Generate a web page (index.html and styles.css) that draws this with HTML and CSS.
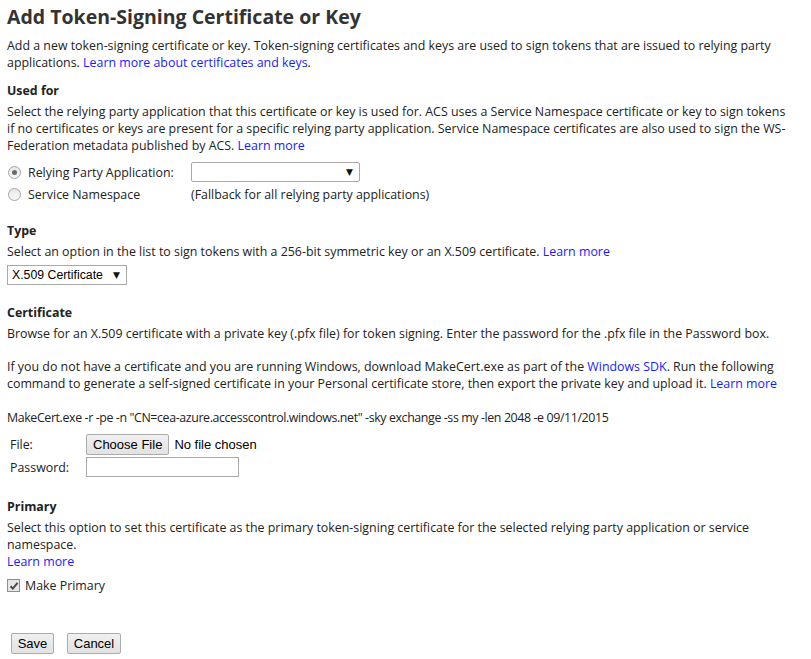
FILE: index.html
```html
<!DOCTYPE html>
<html>
<head>
<meta charset="utf-8">
<link rel="stylesheet" href="styles.css">
</head>
<body>
<div class="page">
  <h1 class="title">Add Token-Signing Certificate or Key</h1>
  <p class="para intro">Add a new token-signing certificate or key. Token-signing certificates and keys are used to sign tokens that are issued to relying party<br>applications. <a class="link" href="#">Learn more about certificates and keys</a>.</p>

  <h2 class="heading">Used for</h2>
  <p class="para">Select the relying party application that this certificate or key is used for. ACS uses a Service Namespace certificate or key to sign tokens<br>if no certificates or keys are present for a specific relying party application. Service Namespace certificates are also used to sign the WS-<br>Federation metadata published by ACS. <a class="link" href="#">Learn more</a></p>

  <div class="radios">
    <div class="radio-row">
      <span class="radio checked"></span>
      <span class="radio-label">Relying Party Application:</span>
      <span class="rp-select"><span class="arrow">▼</span></span>
    </div>
    <div class="radio-row">
      <span class="radio"></span>
      <span class="radio-label">Service Namespace</span>
      <span class="fallback">(Fallback for all relying party applications)</span>
    </div>
  </div>

  <h2 class="heading type-heading">Type</h2>
  <p class="para">Select an option in the list to sign tokens with a 256-bit symmetric key or an X.509 certificate. <a class="link" href="#">Learn more</a></p>
  <div class="type-select">X.509 Certificate <span class="arrow">▼</span></div>

  <h2 class="heading cert-heading">Certificate</h2>
  <p class="para">Browse for an X.509 certificate with a private key (.pfx file) for token signing. Enter the password for the .pfx file in the Password box.</p>
  <p class="para gap first-gap">If you do not have a certificate and you are running Windows, download MakeCert.exe as part of the <a class="link" href="#">Windows SDK</a>. Run the following<br>command to generate a self-signed certificate in your Personal certificate store, then export the private key and upload it. <a class="link" href="#">Learn more</a></p>
  <p class="para gap cmd">MakeCert.exe -r -pe -n "CN=cea-azure.accesscontrol.windows.net" -sky exchange -ss my -len 2048 -e 09/11/2015</p>

  <div class="form-grid">
    <span class="form-label">File:</span>
    <span class="file-field"><span class="btn">Choose File</span><span class="nofile">No file chosen</span></span>
    <span class="form-label">Password:</span>
    <span class="text-input"></span>
  </div>

  <h2 class="heading primary-heading">Primary</h2>
  <p class="para">Select this option to set this certificate as the primary token-signing certificate for the selected relying party application or service<br>namespace.<br><a class="link" href="#">Learn more</a></p>
  <div class="check-row">
    <span class="checkbox"><svg width="10" height="10" viewBox="0 0 10 10"><path d="M1.5 5.2 L3.8 7.6 L8.6 1.8" fill="none" stroke="#4a4a4a" stroke-width="2"/></svg></span>
    <span class="check-label">Make Primary</span>
  </div>

  <div class="actions">
    <span class="btn save">Save</span>
    <span class="btn cancel">Cancel</span>
  </div>
</div>
</body>
</html>
```

FILE: styles.css
```css
html, body {
  margin: 0;
  padding: 0;
  background: #ffffff;
}
.page {
  padding: 4px 0 0 7px;
  font-family: "Open Sans", "Noto Sans", sans-serif;
  font-size: 12.4px;
  line-height: 17px;
  color: #222222;
  width: 804px;
}
.title {
  margin: 0;
  font-size: 19.5px;
  line-height: 26px;
  font-weight: 700;
  color: #333333;
}
.para {
  margin: 0;
  white-space: nowrap;
}
.intro {
  margin-top: 7px;
}
.link {
  color: #1a1aff;
  text-decoration: none;
}
.heading {
  margin: 11px 0 4px 0;
  font-size: 12.4px;
  line-height: 17px;
  font-weight: 700;
  color: #222222;
}
.radios {
  margin-top: 8px;
  display: flex;
  flex-direction: column;
  gap: 2px;
}
.radio-row {
  display: flex;
  align-items: center;
  height: 20px;
}
.radio {
  width: 11px;
  height: 11px;
  border-radius: 50%;
  border: 1px solid #a5a5a5;
  background: linear-gradient(#e8e8e8, #f8f8f8);
  margin: 0 7px 0 1px;
  position: relative;
  flex: none;
}
.radio.checked::after {
  content: "";
  position: absolute;
  left: 3px;
  top: 3px;
  width: 5px;
  height: 5px;
  border-radius: 50%;
  background: #6a6a6a;
}
.radio-label {
  width: 163px;
  flex: none;
}
.rp-select {
  width: 167px;
  height: 18px;
  border: 1px solid #a9a9a9;
  border-radius: 2px;
  display: flex;
  justify-content: flex-end;
  align-items: center;
  box-sizing: content-box;
}
.arrow {
  font-family: "DejaVu Sans", sans-serif;
  font-size: 9px;
  color: #111;
  margin-right: 6px;
}
.type-heading {
  margin-top: 18px;
}
.type-select {
  margin-top: 5px;
  width: 114px;
  height: 18px;
  border: 1px solid #a9a9a9;
  font-family: "Liberation Sans", Arial, sans-serif;
  font-size: 12.3px;
  line-height: 18px;
  color: #000;
  padding-left: 4px;
  display: flex;
  justify-content: space-between;
  align-items: center;
}
.type-select .arrow {
  margin-right: 6px;
}
.cert-heading {
  margin-top: 19px;
}
.gap {
  margin-top: 17px;
}
.first-gap {
  margin-top: 16px;
}
.cmd {
  letter-spacing: -0.39px;
}
.form-grid {
  display: grid;
  grid-template-columns: 76px auto;
  grid-auto-rows: 20px;
  row-gap: 3px;
  align-items: center;
  margin-top: 8px;
  padding-left: 3px;
}
.file-field {
  display: flex;
  align-items: center;
  gap: 5px;
  font-family: "Liberation Sans", Arial, sans-serif;
  font-size: 13px;
  color: #000;
}
.btn {
  display: inline-flex;
  align-items: center;
  justify-content: center;
  box-sizing: border-box;
  height: 21px;
  padding: 0 6px;
  border: 1px solid #acacac;
  border-radius: 2px;
  background: linear-gradient(#f0f0f0, #e2e2e2);
  font-family: "Liberation Sans", Arial, sans-serif;
  font-size: 13px;
  color: #000;
}
.text-input {
  width: 151px;
  height: 18px;
  border: 1px solid #a9a9a9;
  display: block;
}
.primary-heading {
  margin-top: 21px;
}
.check-row {
  margin-top: 7px;
  display: flex;
  align-items: center;
  height: 17px;
}
.checkbox {
  width: 11px;
  height: 11px;
  border: 1px solid #8f8f8f;
  background: #e6e6e6;
  display: inline-flex;
  align-items: center;
  justify-content: center;
  margin: 0 5px 0 0;
}
.actions {
  margin-top: 39px;
  display: flex;
  gap: 13px;
  padding-left: 4px;
}
.save {
  width: 43px;
}
.cancel {
  width: 54px;
}
```
